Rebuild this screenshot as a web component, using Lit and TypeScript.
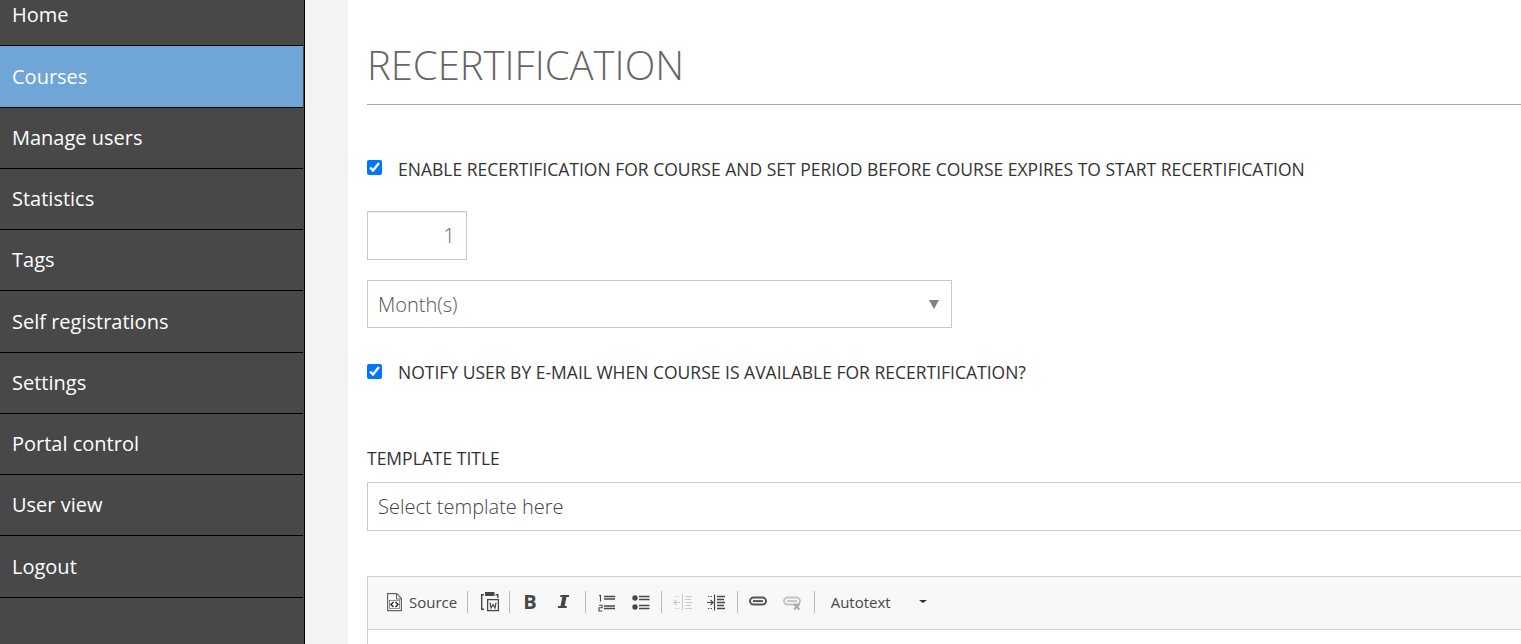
import { LitElement, html, css, svg } from "lit";
import { customElement } from "lit/decorators.js";

const NAV = ["Home","Courses","Manage users","Statistics","Tags","Self registrations","Settings","Portal control","User view","Logout"];

@customElement("app-root")
export class AppRoot extends LitElement {
  static styles = css`
    :host { display: block; height: 644px; overflow: hidden; font-family: "Open Sans", sans-serif; background: #fff; }
    .page { display: flex; height: 644px; overflow: hidden; }
    .side { flex: 0 0 304px; background: #484848; border-right: 1px solid #000; }
    .nav { margin-top: -14.9px; width: 303px; }
    .item { box-sizing: border-box; height: 61.25px; padding: 0 12px .5px; display: flex; align-items: center; color: #fff; font-size: 20px; border-bottom: 1px solid #000; }
    .item.active { background: #6fa5d7; }
    .gutter { flex: 0 0 43px; background: #f3f3f3; }
    .main { flex: 1 1 auto; min-width: 0; background: #fff; padding: 0 0 0 19px; overflow: hidden; }
    h1 { margin: 38px 0 0; height: 66px; font-weight: 300; font-size: 40px; line-height: 54px; color: #666; border-bottom: 1px solid #aaa; }
    .check { display: flex; align-items: center; color: #333; font-size: 17.5px; line-height: 22px; }
    .check input { width: 15px; height: 15px; margin: 0 16px 0 0; flex: none; position: relative; top: -2px; }
    .c1 { margin-top: 53px; }
    .c2 { margin-top: 33px; }
    .c2 input { top: -1px; }
    .num { box-sizing: border-box; display: block; margin-top: 31px; width: 100px; height: 49px; border: 1px solid #c8c8c8; box-shadow: inset 0 1px 1px rgba(0,0,0,.075); text-align: right; padding: 0 11px; font: 300 20px "Open Sans", sans-serif; color: #666; outline: none; }
    .sel { box-sizing: border-box; margin-top: 20px; height: 48px; border: 1px solid #c8c8c8; padding: 0 10px; display: flex; align-items: center; justify-content: space-between; font-weight: 300; font-size: 20px; color: #555; background: #fff; }
    .month { width: 585px; }
    .caret { width: 0; height: 0; border-left: 5px solid transparent; border-right: 5px solid transparent; border-top: 9px solid #808080; margin-right: 2px; }
    .lab { margin-top: 64px; font-size: 17.5px; line-height: 22px; color: #333; }
    .tpl { margin-top: 13px; height: 49px; width: 1200px; color: #444; }
    .tb { box-sizing: border-box; margin-top: 45px; width: 1200px; height: 54px; background: #f8f8f8; border: 1px solid #d1d1d1; display: flex; align-items: center; padding: 0 0 3px 15px; color: #474747; font-size: 15px; }
    .ed { width: 1200px; height: 20px; border-left: 1px solid #d1d1d1; }
    .b { display: flex; align-items: center; justify-content: center; width: 34.5px; height: 24px; flex: none; }
    .b svg { display: block; }
    .bold { font-weight: 700; font-size: 20px; line-height: 1; color: #474747; }
    .sep { width: 1px; height: 22px; background: #bcbcbc; flex: none; margin: 0 3px; }
    .sep.last { margin-left: 4px; }
    .src { display: flex; align-items: center; gap: 2px; padding: 0 7px 0 0; flex: none; }
    .auto { padding: 0 0 0 13px; display: flex; align-items: center; width: 96px; justify-content: space-between; flex: none; }
    .auto i { width: 0; height: 0; border-left: 4px solid transparent; border-right: 4px solid transparent; border-top: 3px solid #333; }
  `;

  icon(body: unknown) {
    return html`<svg width="24" height="24" viewBox="0 0 24 24" fill="none">${body}</svg>`;
  }

  render() {
    const d = "#474747";
    const src = this.icon(svg`<path d="M4.600 3.600h9.200l4.600 5v12h-13.800z" stroke="#666" stroke-width="1.200"/><path d="M13.500 3.600v5.400h5" stroke="#666" stroke-width="1"/><rect x="6.500" y="10.500" width="10" height="8" fill="#fff" stroke="#777" stroke-width=".8"/><path d="M10.500 12 8 14.500l2.500 2.500M12.500 12l2.500 2.500-2.500 2.500" stroke="#333" stroke-width="1.600"/>`);
    const paste = this.icon(svg`<path d="M8 4.700H5.700V19.300H8" stroke=${d} stroke-width="1.400"/><rect x="9" y="2" width="9.500" height="4" fill=${d}/><path d="M19.500 4.700h2.300V8" stroke=${d} stroke-width="1.400"/><rect x="11.600" y="9.600" width="10.800" height="11" stroke=${d} stroke-width="1.300"/><path d="M14 12.500l1 5.500 2-3.500 2 3.500 1-5.500" stroke=${d} stroke-width="1.200"/>`);
    const ital = this.icon(svg`<path d="M8.500 5h8.700l-.4 2.100h-2.300l-1.800 8.800h2.300l-.4 2.100H5.800l.4-2.100h2.300l1.800-8.800H8.100z" fill=${d}/>`);
    const ol = this.icon(svg`<path d="M10 6.500h11M10 9h11M10 16h11M10 18.500h11" stroke=${d} stroke-width="1.300"/><path d="M6.500 5v6.500M5.300 6 6.500 5M5 15.200h3v2.600H5V21h3.300" stroke=${d} stroke-width="1.100"/>`);
    const ul = this.icon(svg`<circle cx="7" cy="8" r="2.700" fill=${d}/><circle cx="7" cy="17" r="2.700" fill=${d}/><path d="M11 6.500h10.500M11 9.500h10.500M11 15.500h10.500M11 18.500h10.500" stroke=${d} stroke-width="1.400"/>`);
    const outdent = (c: string) => this.icon(svg`<path d="M12.500 4.500v16" stroke=${c} stroke-width="1"/><path d="M15 6.500h7M15 9.500h6M15 12.500h7M15 15.500h6M15 18.500h7" stroke=${c} stroke-width="1.200"/><path d="M10 12.500H4M6.500 10l-2.500 2.500L6.500 15" stroke=${c} stroke-width="1.200"/><path d="M5 6.500h5M5 18.500h5" stroke=${c} stroke-width="1.200" stroke-dasharray="1.300 1.300"/>`);
    const indent = (c: string) => this.icon(svg`<path d="M10.500 4.500v16" stroke=${c} stroke-width="1.200"/><path d="M13 6.500h8M13 9.500h7M13 12.500h8M13 15.500h7M13 18.500h8" stroke=${c} stroke-width="1.300"/><path d="M3 12.500h5.500M6.500 10l2.500 2.500L6.500 15" stroke=${c} stroke-width="1.200"/><path d="M4 6.500h4.500M4 18.500h4.500" stroke=${c} stroke-width="1.200" stroke-dasharray="1.300 1.300"/>`);
    const link = (c: string, x: boolean) => this.icon(svg`<rect x="4" y="7.600" width="16" height="7" rx="3.500" stroke=${c} stroke-width="2"/><path d="M7 11.100h10" stroke=${c} stroke-width="2"/>${x ? svg`<path d="M14 14l5.500 5.500M19.500 14L14 19.500" stroke="#a5a5a5" stroke-width="1.800"/>` : ""}`);
    return html`
      <div class="page">
        <aside class="side"><nav class="nav">
          ${NAV.map(n => html`<div class="item ${n === "Courses" ? "active" : ""}">${n}</div>`)}
        </nav></aside>
        <div class="gutter"></div>
        <main class="main">
          <h1>RECERTIFICATION</h1>
          <label class="check c1"><input type="checkbox" checked />ENABLE RECERTIFICATION FOR COURSE AND SET PERIOD BEFORE COURSE EXPIRES TO START RECERTIFICATION</label>
          <input class="num" type="text" .value=${"1"} />
          <div class="sel month">Month(s)<span class="caret"></span></div>
          <label class="check c2"><input type="checkbox" checked />NOTIFY USER BY E-MAIL WHEN COURSE IS AVAILABLE FOR RECERTIFICATION?</label>
          <div class="lab">TEMPLATE TITLE</div>
          <div class="sel tpl">Select template here</div>
          <div class="tb">
            <span class="src">${src}<span>Source</span></span><span class="sep"></span>
            <span class="b">${paste}</span><span class="sep"></span>
            <span class="b bold">B</span><span class="b">${ital}</span><span class="sep"></span>
            <span class="b">${ol}</span><span class="b">${ul}</span><span class="sep"></span>
            <span class="b">${outdent("#c9c9c9")}</span><span class="b">${indent(d)}</span><span class="sep"></span>
            <span class="b">${link("#555", false)}</span><span class="b">${link("#c4c4c4", true)}</span><span class="sep last"></span>
            <span class="auto">Autotext<i></i></span>
          </div>
          <div class="ed"></div>
        </main>
      </div>`;
  }
}
